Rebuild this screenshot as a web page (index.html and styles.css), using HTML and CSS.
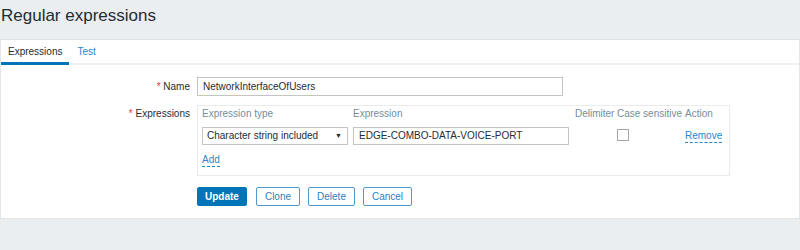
FILE: index.html
```html
<!DOCTYPE html>
<html>
<head>
<meta charset="utf-8">
<link rel="stylesheet" href="styles.css">
</head>
<body>
<header class="page-header"><h1>Regular expressions</h1></header>
<main class="panel">
  <nav class="tabs">
    <a class="tab active">Expressions</a>
    <a class="tab">Test</a>
  </nav>
  <div class="form">
    <div class="row name-row">
      <label class="lbl"><span class="req">*</span> Name</label>
      <div class="field"><div class="text name">NetworkInterfaceOfUsers</div></div>
    </div>
    <div class="row exprs">
      <label class="lbl"><span class="req">*</span> Expressions</label>
      <div class="field">
        <div class="box">
          <div class="grid">
            <div class="th">Expression type</div>
            <div class="th">Expression</div>
            <div class="th">Delimiter</div>
            <div class="th">Case sensitive</div>
            <div class="th">Action</div>
            <div class="td"><div class="select"><span>Character string included</span><span class="arrow">▼</span></div></div>
            <div class="td"><div class="text expr">EDGE-COMBO-DATA-VOICE-PORT</div></div>
            <div class="td"></div>
            <div class="td"><span class="cb"></span></div>
            <div class="td"><a class="link remove">Remove</a></div>
          </div>
          <a class="link add">Add</a>
        </div>
      </div>
    </div>
    <div class="row buttons">
      <div class="lbl"></div>
      <div class="field btns">
        <button class="btn primary">Update</button>
        <button class="btn">Clone</button>
        <button class="btn">Delete</button>
        <button class="btn">Cancel</button>
      </div>
    </div>
  </div>
</main>
</body>
</html>
```

FILE: styles.css
```css
* { box-sizing: border-box; }
html, body { margin: 0; padding: 0; }
body {
  background: #ebeef0;
  font-family: "Liberation Sans", Arial, sans-serif;
  font-size: 10px;
  color: #1f2c33;
  width: 800px;
  height: 250px;
  overflow: hidden;
}
.page-header { height: 39px; padding: 6px 0 0 1px; }
.page-header h1 {
  margin: 0;
  font-weight: normal;
  font-size: 17px;
  line-height: 20px;
  color: #1f2c33;
}
.panel {
  background: #fff;
  border: 1px solid #e3e6e8;
  border-top-color: #dfe3e6;
  width: 800px;
  height: 180px;
}
.tabs {
  display: flex;
  border-bottom: 2px solid #eef0f2;
  height: 25px;
}
.tab {
  padding: 6px 8px 0 8px;
  color: #2a86c8;
  line-height: 12px;
  height: 25px;
}
.tab.active {
  color: #1f2c33;
  border-bottom: 3px solid #0275b8;
  margin-bottom: -2px;
  padding: 6px 7px 0 7px;
}
.form { padding-top: 12px; }
.row { display: flex; }
.lbl {
  width: 196px;
  flex: none;
  text-align: right;
  padding-right: 7px;
  line-height: 19px;
  color: #1f2c33;
}
.req { color: #e33734; }
.field { flex: none; }
.text {
  color: #1f2c33;
  border: 1px solid #c4c4c4;
  height: 19px;
  line-height: 17px;
  padding: 0 5px;
  background: #fff;
}
.name { width: 366px; }
.exprs { margin-top: 9px; }
.exprs .lbl { line-height: 12px; padding-top: 3px; }
.box {
  border: 1px solid #ebebeb;
  width: 533px;
  height: 71px;
  padding: 2px 4px 0 4px;
}
.grid {
  display: grid;
  grid-template-columns: 151px 222px 42px 68px 40px;
  grid-template-rows: 12px 18px;
  row-gap: 7px;
}
.th {
  color: #768d99;
  line-height: 12px;
  white-space: nowrap;
}
.select {
  width: 146px;
  height: 18px;
  border: 1px solid #c4c4c4;
  padding: 0 4px;
  line-height: 16px;
  display: flex;
  justify-content: space-between;
  color: #1f2c33;
}
.select .arrow { font-size: 7px; line-height: 16px; padding-right: 1px; }
.expr { width: 216px; height: 18px; line-height: 16px; }
.cb {
  display: block;
  width: 12px;
  height: 12px;
  border: 1px solid #a7a7a7;
  margin-top: 2px;
}
.link {
  color: #2a86c8;
  border-bottom: 1px dashed #2a86c8;
  line-height: 12px;
  display: inline-block;
}
.remove { margin-top: 3px; }
.add { margin-top: 9px; }
.buttons { margin-top: 11px; }
.btns { display: flex; gap: 8px; }
.btn {
  font-family: "Liberation Sans", Arial, sans-serif;
  font-size: 10px;
  height: 19px;
  padding: 0 8px;
  border: 1px solid #4c9bd0;
  background: #fff;
  color: #2a7fbf;
  border-radius: 2px;
  line-height: 17px;
}
.btn.primary {
  background: #0275b8;
  border-color: #0275b8;
  color: #fff;
  font-weight: bold;
  padding: 0 7px;
  margin-right: 1px;
}
```
